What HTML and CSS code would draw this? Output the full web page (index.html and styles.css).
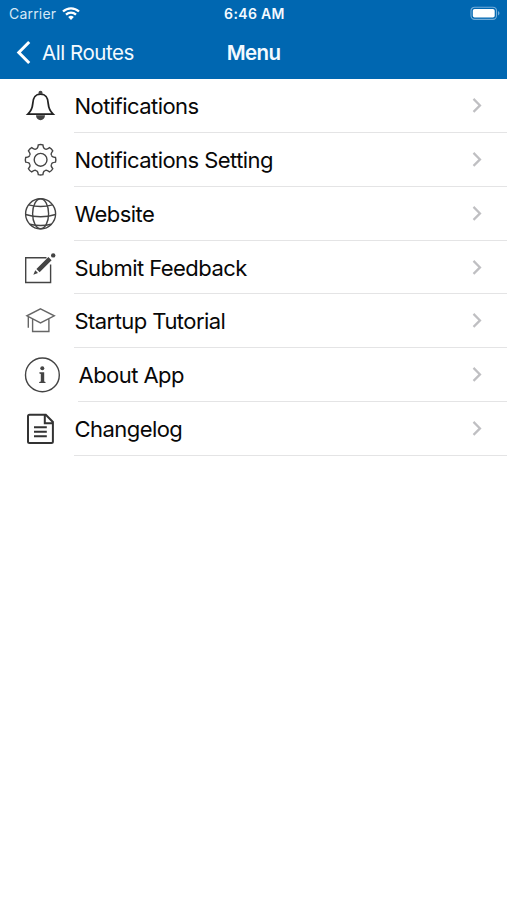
FILE: index.html
```html
<!DOCTYPE html>
<html lang="en">
<head>
  <meta charset="UTF-8" />
  <meta name="viewport" content="width=device-width, initial-scale=1.0" />
  <title>Menu</title>
  <link rel="stylesheet" href="styles.css">
</head>
<body>
  <header class="header">
    <div class="status-bar">
      <div class="carrier">
        <span>Carrier</span>
        <svg class="wifi" viewBox="0 0 18 14" width="18" height="14">
          <path d="M1 4.500a11.600 11.600 0 0 1 16 0M4 7.600a7.300 7.300 0 0 1 10 0" />
          <path class="dot" d="M6.200 10.100a4 4 0 0 1 5.600 0L9 12.900z" />
        </svg>
      </div>
      <span class="clock">6:46 AM</span>
      <svg class="battery" viewBox="0 0 30 14" width="30" height="14">
        <rect class="shell" x="1" y="0.2" width="25.5" height="12.2" rx="3.6" />
        <rect class="level" x="2.800" y="2" width="21.900" height="8.600" rx="1.800" />
        <path class="cap" d="M28 4.100c2 .8 2 3.600 0 4.400z" />
      </svg>
    </div>
    <nav class="nav-bar">
      <a class="back" href="#">
        <svg viewBox="0 0 16 26" width="16" height="26"><path d="M13.200 2L2.800 12.500l10.400 10.500" /></svg>
        <span>All Routes</span>
      </a>
      <h1 class="title">Menu</h1>
    </nav>
  </header>

  <main class="menu">
    <a class="row" href="#">
      <svg class="icon bold" viewBox="0 0 40 40">
        <path d="M7.900 28.200c3.400-3.400 4.500-6.200 4.800-10.200.3-5.700 1.600-9.800 7.800-9.800s7.500 4.100 7.800 9.800c.3 4 1.400 6.800 4.800 10.200z" />
        <path class="fill" stroke="none" d="M18.500 8V6.700a2 2 0 0 1 4 0V8zM16 29.200h9a4.500 5 0 0 1-9 0z" />
      </svg>
      <span class="label">Notifications</span>
      <svg class="chevron" viewBox="0 0 12 18"><path d="M2.500 2.500L9 9l-6.500 6.500" /></svg>
    </a>
    <a class="row" href="#">
      <svg class="icon" viewBox="0 0 40 40">
        <defs>
          <path id="tooth" d="M-4.600-11.200C-3.400-10.700-2.700-12.200-2.300-14.900Q0-15.600 2.300-14.900C2.700-12.200 3.400-10.700 4.600-11.200" />
        </defs>
        <g transform="translate(20.600 19.800)">
          <use href="#tooth" />
          <use href="#tooth" transform="rotate(45)" />
          <use href="#tooth" transform="rotate(90)" />
          <use href="#tooth" transform="rotate(135)" />
          <use href="#tooth" transform="rotate(180)" />
          <use href="#tooth" transform="rotate(225)" />
          <use href="#tooth" transform="rotate(270)" />
          <use href="#tooth" transform="rotate(315)" />
          <circle r="6.400" />
        </g>
      </svg>
      <span class="label">Notifications Setting</span>
      <svg class="chevron" viewBox="0 0 12 18"><path d="M2.500 2.500L9 9l-6.500 6.500" /></svg>
    </a>
    <a class="row" href="#">
      <svg class="icon" viewBox="0 0 40 40">
        <circle cx="20.600" cy="19.800" r="15" />
        <ellipse cx="20.600" cy="19.800" rx="8" ry="15" />
        <path d="M8.700 10.800q11.900 3.400 23.800 0M5.600 20.500q15 4.600 30 0M10 30.300q10.600 2.400 21.200 0" />
      </svg>
      <span class="label">Website</span>
      <svg class="chevron" viewBox="0 0 12 18"><path d="M2.500 2.500L9 9l-6.500 6.500" /></svg>
    </a>
    <a class="row" href="#">
      <svg class="icon" viewBox="0 0 40 40">
        <path d="M26.500 9.800H5.700v24.700h24.900V16.500" />
        <path class="fill" stroke="none" d="M13.300 26.800l2-4.600 2.700 2.700zM16.400 21.100L28.400 9.100l3.200 3.200-12 12z" />
        <circle class="fill" stroke="none" cx="33.200" cy="7.400" r="2.200" />
      </svg>
      <span class="label">Submit Feedback</span>
      <svg class="chevron" viewBox="0 0 12 18"><path d="M2.500 2.500L9 9l-6.500 6.500" /></svg>
    </a>
    <a class="row" href="#">
      <svg class="icon light" viewBox="0 0 40 40">
        <path d="M20.500 7.900l13.800 6.900-13.800 7.100-13.600-7.100zM12.600 18v12.500h16.300V18M8.300 15.500v11.300" />
      </svg>
      <span class="label">Startup Tutorial</span>
      <svg class="chevron" viewBox="0 0 12 18"><path d="M2.500 2.500L9 9l-6.500 6.500" /></svg>
    </a>
    <a class="row about" href="#">
      <svg class="icon" viewBox="0 0 40 40">
        <circle cx="22.400" cy="19.900" r="16.900" />
        <circle class="fill" stroke="none" cx="22.300" cy="13.200" r="2" />
        <path class="fill" stroke="none" d="M19.400 17.300h4.800v9.200l1.300.5v1.100h-6.300V27l1.600-.5v-7.600l-1.400-.5z" />
      </svg>
      <span class="label">About App</span>
      <svg class="chevron" viewBox="0 0 12 18"><path d="M2.500 2.500L9 9l-6.500 6.500" /></svg>
    </a>
    <a class="row" href="#">
      <svg class="icon document" viewBox="0 0 40 40">
        <path d="M25.800 5.700H9.500q-1.500 0-1.500 1.500v25.200q0 1.500 1.500 1.500h21.900q1.500 0 1.500-1.500V13zM24.800 6v8.300h8" />
        <path d="M14 18.300h12.800M14 22.800h12.800M14 27.200h12.800" />
      </svg>
      <span class="label">Changelog</span>
      <svg class="chevron" viewBox="0 0 12 18"><path d="M2.500 2.500L9 9l-6.500 6.500" /></svg>
    </a>
  </main>
</body>
</html>
```
FILE: styles.css
```css
:root {
  --blue: #0067b1;
  --line: #e4e4e5;
  --icon: #444;
}

* {
  box-sizing: border-box;
}

body {
  margin: 0;
  min-height: 100vh;
  background: #fff;
  color: #080808;
  font-family: Inter, "Liberation Sans", sans-serif;
}

a {
  color: inherit;
  text-decoration: none;
}

svg {
  display: block;
  flex: none;
  fill: none;
}

.header {
  height: 79.4px;
  background: var(--blue);
  color: #f4faff;
}

.status-bar {
  display: grid;
  grid-template-columns: 1fr auto 1fr;
  align-items: center;
  height: 27px;
  padding: 0 7px 0 9px;
  font-size: 14px;
}

.carrier {
  display: flex;
  align-items: center;
  gap: 6px;
  color: #d6e8f6;
  letter-spacing: 0.2px;
}

.wifi {
  stroke: #fff;
  stroke-width: 2.3;
}

.wifi .dot {
  fill: #fff;
  stroke: none;
}

.clock {
  font-weight: 600;
  letter-spacing: 0.35px;
}

.battery {
  justify-self: end;
  overflow: visible;
}

.battery .shell {
  stroke: #73add9;
  stroke-width: 1.1;
}

.battery .level {
  fill: #fff;
}

.battery .cap {
  fill: #73add9;
}

.nav-bar {
  display: grid;
  grid-template-columns: 1fr auto 1fr;
  align-items: center;
  height: 51px;
  padding: 0 16px;
}

.back {
  display: flex;
  align-items: center;
  gap: 10px;
  font-size: 20.5px;
  letter-spacing: -0.45px;
}

.back svg {
  stroke: #fff;
  stroke-width: 3;
}

.title {
  margin: 0;
  font-size: 20.5px;
  font-weight: 600;
  letter-spacing: -0.6px;
}

.row {
  display: flex;
  align-items: center;
  height: 53.75px;
  padding-left: 20px;
}

.icon {
  width: 40px;
  height: 40px;
  margin-right: 14px;
  stroke: var(--icon);
  stroke-width: 1.4;
}

.icon .fill {
  fill: var(--icon);
}

.icon.bold {
  stroke: #222;
  stroke-width: 1.8;
}

.icon.light {
  stroke: #666;
}

.icon.document {
  stroke: #333;
  stroke-width: 2;
}

.label {
  display: flex;
  flex: 1;
  align-items: center;
  align-self: stretch;
  padding: 1px 0 0 0.5px;
  border-bottom: 1px solid var(--line);
  font-size: 22px;
  letter-spacing: -0.55px;
}

.about .icon {
  margin-right: 18px;
}

.chevron {
  box-sizing: content-box;
  width: 12px;
  height: 18px;
  padding: 17.375px 24px 17.375px 0;
  border-bottom: 1px solid var(--line);
  stroke: #bfbfc2;
  stroke-width: 2.2;
}
```
